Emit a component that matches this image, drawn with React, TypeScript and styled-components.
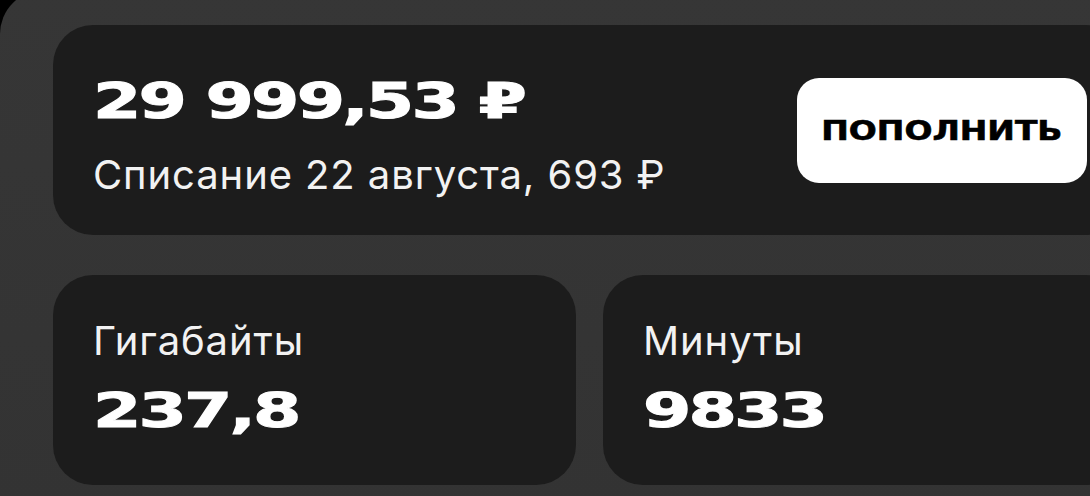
import React from "react";
import styled, { createGlobalStyle } from "styled-components";

const GlobalStyle = createGlobalStyle`
  html, body {
    margin: 0;
    padding: 0;
    background: #000;
    width: 1090px;
    height: 496px;
    overflow: hidden;
  }
  * { box-sizing: border-box; }
`;

const Screen = styled.div`
  width: 1200px;
  height: 520px;
  margin-top: -10px;
  padding: 35px 0 0 53px;
  background: linear-gradient(180deg, #363636 0%, #333333 100%);
  border-top-left-radius: 44px;
  display: grid;
  grid-template-columns: 523px 523px;
  column-gap: 27px;
  row-gap: 40px;
  align-content: start;
`;

const Card = styled.div`
  background: #1c1c1c;
  border-radius: 40px;
  height: 210px;
`;

const BalanceCard = styled(Card)`
  grid-column: 1 / -1;
  display: flex;
  align-items: center;
  justify-content: space-between;
  padding: 0 39px 0 40px;
`;

const Info = styled.div`
  display: flex;
  flex-direction: column;
  gap: 29px;
  padding-top: 11px;
`;

const WideText = styled.div<{ $size: number; $scale: number }>`
  font-family: "DejaVu Sans", "Liberation Sans", sans-serif;
  font-weight: 700;
  font-size: ${(p) => p.$size}px;
  line-height: 1;
  letter-spacing: -2px;
  color: #fff;
  -webkit-text-stroke: 1px #fff;
  white-space: nowrap;
  transform: scaleX(${(p) => p.$scale});
  transform-origin: left center;
`;

const Caption = styled.div`
  font-family: Inter, "Noto Sans", sans-serif;
  font-weight: 400;
  font-size: 40px;
  letter-spacing: 0.9px;
  line-height: 1;
  color: #f2f2f2;
  white-space: nowrap;
`;

const TopUpButton = styled.button`
  width: 290px;
  height: 105px;
  border: none;
  border-radius: 22px;
  background: #fff;
  display: flex;
  align-items: center;
  justify-content: center;
  padding: 0;
  cursor: pointer;
`;

const ButtonLabel = styled.span`
  font-family: "DejaVu Sans", "Liberation Sans", sans-serif;
  font-weight: 700;
  font-size: 27px;
  line-height: 1;
  color: #000;
  -webkit-text-stroke: 0.6px #000;
  transform: scaleX(1.22);
  white-space: nowrap;
`;

const StatCard = styled(Card)`
  display: flex;
  flex-direction: column;
  gap: 25px;
  padding: 46px 40px 0;
`;

const stats = [
  { label: "Гигабайты", value: "237,8" },
  { label: "Минуты", value: "9833" },
];

export default function App() {
  return (
    <>
      <GlobalStyle />
      <Screen>
        <BalanceCard>
          <Info>
            <WideText $size={49} $scale={1.42}>29 999,53 ₽</WideText>
            <Caption>Списание 22 августа, 693 ₽</Caption>
          </Info>
          <TopUpButton>
            <ButtonLabel>ПОПОЛНИТЬ</ButtonLabel>
          </TopUpButton>
        </BalanceCard>
        {stats.map((s) => (
          <StatCard key={s.label}>
            <Caption>{s.label}</Caption>
            <WideText $size={48} $scale={1.45}>{s.value}</WideText>
          </StatCard>
        ))}
      </Screen>
    </>
  );
}
